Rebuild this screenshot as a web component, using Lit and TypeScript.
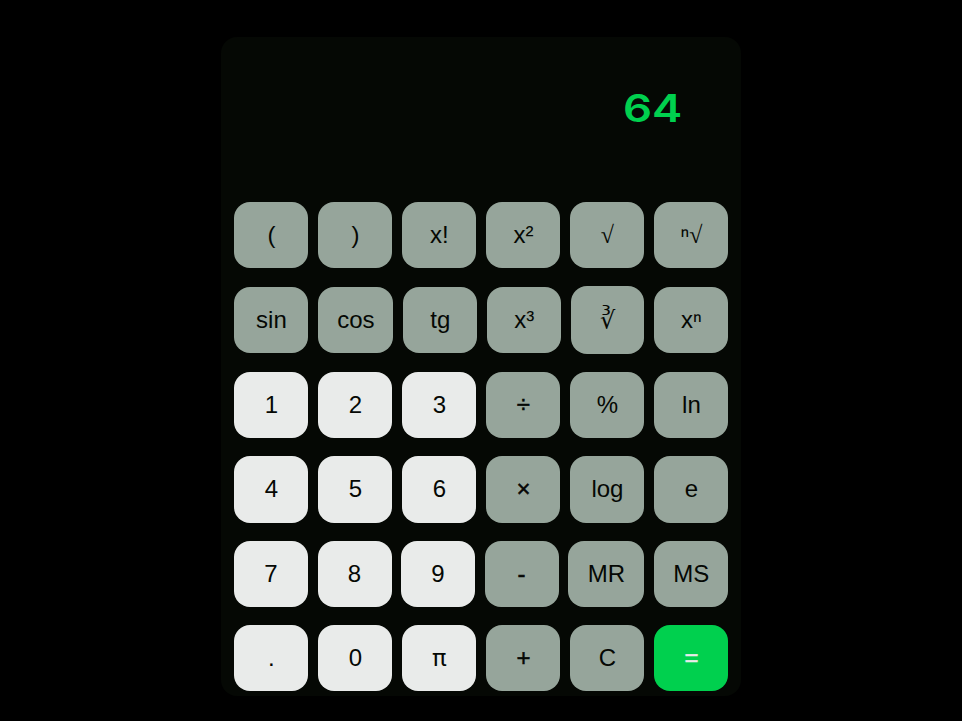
import { LitElement, html, css } from "lit";
import { customElement } from "lit/decorators.js";
import { classMap } from "lit/directives/class-map.js";

type Key = { label: string; kind?: "digit" | "equals"; glyph?: "root" | "cube" | "sign" | "pi" };
const digit = (label: string): Key => ({ label, kind: "digit" });
const op = (label: string): Key => ({ label });
const sign = (label: string): Key => ({ label, glyph: "sign" });

const ROWS: { name: string; keys: Key[] }[] = [
  { name: "powers", keys: [op("("), op(")"), op("x!"), op("x²"), { label: "√", glyph: "root" }, { label: "ⁿ√", glyph: "root" }] },
  { name: "trig", keys: [op("sin"), op("cos"), op("tg"), op("x³"), { label: "∛", glyph: "cube" }, op("xⁿ")] },
  { name: "low", keys: [digit("1"), digit("2"), digit("3"), sign("÷"), op("%"), op("ln")] },
  { name: "mid", keys: [digit("4"), digit("5"), digit("6"), sign("×"), op("log"), op("e")] },
  { name: "memory", keys: [digit("7"), digit("8"), digit("9"), sign("-"), op("MR"), op("MS")] },
  { name: "last", keys: [digit("."), digit("0"), { label: "π", kind: "digit", glyph: "pi" }, sign("+"), op("C"), { label: "=", kind: "equals", glyph: "sign" }] },
];

@customElement("app-root")
export class AppRoot extends LitElement {
  static styles = css`
    :host {
      display: block;
      height: 721px;
      overflow: hidden;
      background: #000;
      padding-top: 37px;
      box-sizing: border-box;
    }
    .calculator {
      width: 520px;
      height: 659px;
      margin-left: 221.3px;
      padding: 0 13px;
      box-sizing: border-box;
      border-radius: 16px;
      background: #050804;
    }
    .display {
      height: 165.4px;
      box-sizing: border-box;
      padding: 47.5px 46.5px 0 0;
      text-align: right;
      color: #00d04e;
      font: 600 38.5px/47px Inter, "DejaVu Sans", sans-serif;
    }
    .result {
      display: inline-block;
      transform: scaleX(1.18);
      transform-origin: right;
    }
    .keys {
      display: grid;
      grid-auto-rows: 66px;
      row-gap: 18.6px;
    }
    .row {
      display: grid;
      grid-template-columns: repeat(6, 74.2px);
      justify-content: space-between;
      width: 494.2px;
    }
    .trig {
      grid-template-columns: 74.2px 75px 74.2px 74.2px 73.2px 74.2px;
    }
    .memory {
      grid-template-columns: 73.5px 74px 73.5px 74px 76.2px 74.2px;
    }
    .key {
      display: flex;
      align-items: center;
      justify-content: center;
      padding: 0;
      border: 0;
      border-radius: 16px;
      background: #96a59b;
      color: #050804;
      font: 24px "Liberation Sans", Arial, sans-serif;
    }
    .digit { background: #e9ebea; }
    .equals { background: #00d04e; color: #e9ebea; }
    .mid .key { margin-bottom: -0.6px; }
    .sign { -webkit-text-stroke: 0.5px currentColor; }
    .root { font-family: "Liberation Sans", sans-serif; }
    .root .radical { font-family: "Liberation Serif", serif; }
    .trig .cube { margin: -1px 0; }
    .pi { font-family: Roboto, sans-serif; }
  `;

  private label(k: Key) {
    return k.glyph === "root"
      ? html`<span>${k.label.slice(0, -1)}</span><span class="radical">√</span>`
      : k.label;
  }

  render() {
    return html`
      <main class="calculator">
        <div class="display"><span class="result">64</span></div>
        <div class="keys">
          ${ROWS.map(
            (row) => html`<div class="row ${row.name}">
              ${row.keys.map(
                (k) => html`<button
                  class=${classMap({
                    key: true,
                    digit: k.kind === "digit",
                    equals: k.kind === "equals",
                    root: k.glyph === "root",
                    cube: k.glyph === "cube",
                    sign: k.glyph === "sign",
                    pi: k.glyph === "pi",
                  })}
                >${this.label(k)}</button>`
              )}
            </div>`
          )}
        </div>
      </main>
    `;
  }
}
